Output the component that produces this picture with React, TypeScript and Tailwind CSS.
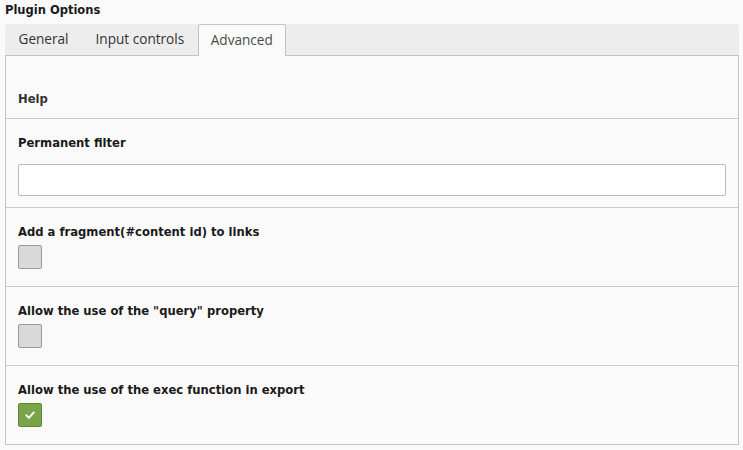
import {ReactNode} from "react";

interface ICheck {
    checked?: boolean
}

function Check({checked}: ICheck) {
    if (checked) {
        return (
            <span className="flex items-center justify-center w-[24px] h-[24px] rounded-[2px] border border-[#5b8a34] bg-[#79a548]">
                <svg width="12" height="12" viewBox="0 0 12 12" fill="none">
                    <path d="M2.2 6.3 L4.9 8.8 L9.8 3.4" stroke="#ffffff" strokeWidth="1.9" strokeLinecap="round" strokeLinejoin="round"/>
                </svg>
            </span>
        );
    }
    return <span className="block w-[24px] h-[24px] rounded-[2px] border border-[#9a9a9a] bg-[#d9d9d9]"></span>;
}

interface ISection {
    label: string
    children?: ReactNode
    last?: boolean
}

function Section({label, children, last}: ISection) {
    return (
        <div className={last ? "px-[12px] pt-[17px] pb-[17px]" : "px-[12px] pt-[17px] pb-[17px] border-b border-[#cccccc]"}>
            <label className="block text-[11.6px] leading-[14px] font-bold text-[#1a1a1a]">{label}</label>
            <div className="mt-[6px]">{children}</div>
        </div>
    );
}

export default function App() {
    const tabs = ['General', 'Input controls', 'Advanced'];
    const active = 'Advanced';

    return (
        <div className="min-h-screen bg-[#fafafa] pt-[3px] font-['DejaVu_Sans',Verdana,sans-serif] text-[#333333]">
            <h3 className="ml-[5px] text-[11.5px] leading-[15px] font-bold text-[#1a1a1a]">Plugin Options</h3>

            <div className="ml-[5px] w-[734px] mt-[6px]">
                <div className="flex h-[31px] bg-[#ededed] rounded-t-[2px]">
                    {tabs.map(tab => (
                        <div key={tab}
                             className={tab === active
                                 ? "relative z-10 flex items-center h-[32px] px-[12px] bg-[#fafafa] border border-b-0 border-[#c4c4c4] rounded-t-[2px] font-['Open_Sans',sans-serif] text-[13.6px] text-[#4a4a4a]"
                                 : "flex items-center h-[31px] px-[13.5px] font-['Open_Sans',sans-serif] text-[13.6px] text-[#333333]"}>
                            {tab}
                        </div>
                    ))}
                </div>

                <div className="border border-[#c4c4c4] bg-[#fafafa]">
                    <div className="px-[12px] pt-[35px] pb-[11px] border-b border-[#cccccc]">
                        <span className="block text-[11.6px] leading-[16px] font-bold text-[#333333]">Help</span>
                    </div>

                    <div className="px-[12px] pt-[17px] pb-[11px] border-b border-[#cccccc]">
                        <label className="block text-[11.6px] leading-[14px] font-bold text-[#1a1a1a]" htmlFor="filter">Permanent filter</label>
                        <input id="filter" type="text"
                               className="block mt-[14px] w-[708px] h-[32px] px-2 bg-white border border-[#bbbbbb] rounded-[2px] focus:outline-none"/>
                    </div>

                    <Section label="Add a fragment(#content id) to links">
                        <Check/>
                    </Section>
                    <Section label={'Allow the use of the "query" property'}>
                        <Check/>
                    </Section>
                    <Section label="Allow the use of the exec function in export" last>
                        <Check checked/>
                    </Section>
                </div>
            </div>
        </div>
    );
}
